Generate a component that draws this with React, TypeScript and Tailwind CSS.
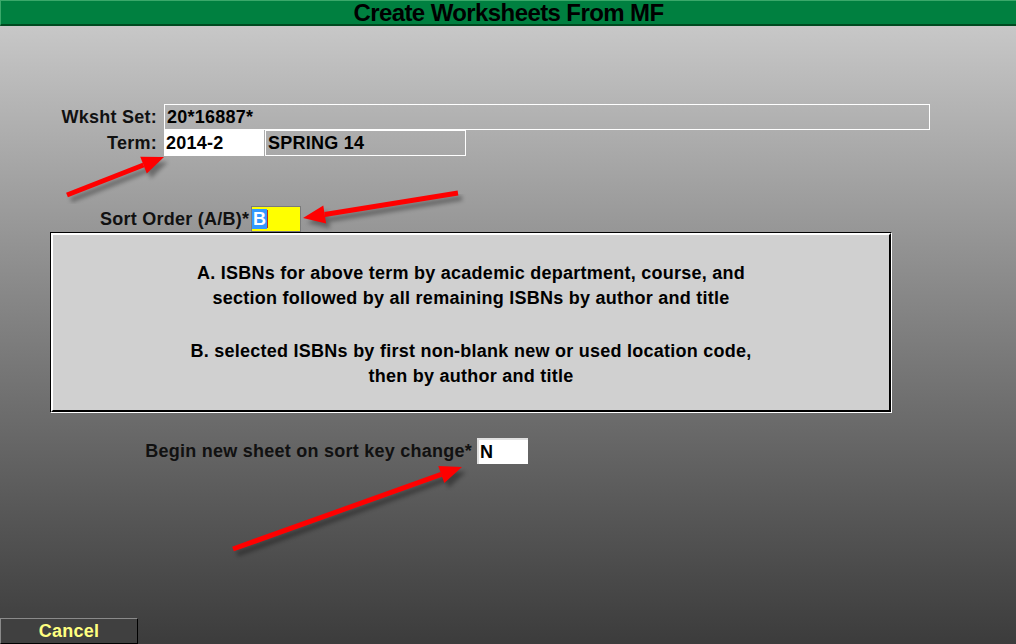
import React from "react";

const font = { fontFamily: '"Liberation Sans", Arial, sans-serif' };

function Arrow({ x1, y1, x2, y2 }: { x1: number; y1: number; x2: number; y2: number }) {
  const a = Math.atan2(y2 - y1, x2 - x1);
  const len = 22;
  const w = 9;
  const bx = x2 - len * Math.cos(a);
  const by = y2 - len * Math.sin(a);
  const px = -Math.sin(a) * w;
  const py = Math.cos(a) * w;
  const head = `${x2},${y2} ${bx + px},${by + py} ${bx - px},${by - py}`;
  return (
    <g>
      <g transform="translate(4,5)" opacity="0.35" filter="url(#blur)">
        <line x1={x1} y1={y1} x2={bx} y2={by} stroke="#000" strokeWidth="5" />
        <polygon points={head} fill="#000" />
      </g>
      <line x1={x1} y1={y1} x2={bx} y2={by} stroke="#ff0000" strokeWidth="5" />
      <polygon points={head} fill="#ff0000" />
    </g>
  );
}

export default function App() {
  return (
    <div
      className="relative w-[1016px] h-[644px] flex flex-col overflow-hidden bg-gradient-to-b from-[#cecece] to-[#3c3c3c] text-[18px] leading-[22px] tracking-[0.25px] font-bold text-[#111]"
      style={font}
    >
      <div className="h-[26px] shrink-0 bg-[#008040] border-t border-t-[#3aa86a] border-l border-l-[#3aa86a] border-b-2 border-b-[#004a20] flex items-center justify-center">
        <span className="text-[24px] font-bold text-black leading-[22px] tracking-[-0.6px]">
          Create Worksheets From MF
        </span>
      </div>

      <div className="flex flex-col pt-[78px]">
        <div className="flex items-center">
          <div className="w-[158px] text-right pr-[1px]">Wksht Set:</div>
          <div className="ml-[6px] w-[766px] h-[26px] border border-white flex items-center pl-[2px] text-black">
            20*16887*
          </div>
        </div>

        <div className="flex items-center">
          <div className="w-[158px] text-right pr-[1px]">Term:</div>
          <div className="ml-[6px] w-[100px] h-[26px] bg-white flex items-center pl-[2px] text-black">2014-2</div>
          <div className="ml-[1px] w-[201px] h-[26px] border border-white flex items-center pl-[2px] text-black">
            SPRING 14
          </div>
        </div>

        <div className="flex items-center mt-[50px]">
          <div className="ml-[100px] w-[150px]">Sort Order (A/B)*</div>
          <div className="ml-[1px] w-[50px] h-[26px] bg-[#ffff00] border border-[#7a7a7a] flex items-center">
            <span className="bg-[#3399ff] text-white px-[1px] leading-[20px]">B</span>
            <span className="w-[1px] h-[18px] bg-[#b03020]" />
          </div>
        </div>

        <div className="ml-[50px] w-[842px] h-[181px] border border-black border-b-white border-r-white">
          <div className="w-full h-full bg-[#d0d0d0] border-t-2 border-l-2 border-white border-b-2 border-r-2 border-b-black border-r-black flex flex-col items-center pt-[26px] text-center leading-[25px] text-black">
            <div>A. ISBNs for above term by academic department, course, and</div>
            <div>section followed by all remaining ISBNs by author and title</div>
            <div className="mt-[28px]">B. selected ISBNs by first non-blank new or used location code,</div>
            <div>then by author and title</div>
          </div>
        </div>

        <div className="flex items-center mt-[25px]">
          <div className="w-[472px] text-right">Begin new sheet on sort key change*</div>
          <div className="ml-[5px] w-[51px] h-[26px] bg-white border-l-2 border-t-2 border-[#e0e0e0] flex items-center pl-[1px] text-black">
            N
          </div>
        </div>
      </div>

      <div className="mt-auto w-[138px] h-[26px] bg-[#404040] border-t border-l border-[#8a8a8a] border-b border-r border-b-black border-r-black flex items-center justify-center text-[#ffff80]">
        Cancel
      </div>

      <svg className="absolute inset-0 pointer-events-none" width="1016" height="644">
        <defs>
          <filter id="blur">
            <feGaussianBlur stdDeviation="2" />
          </filter>
        </defs>
        <Arrow x1={67} y1={195} x2={164} y2={157} />
        <Arrow x1={458} y1={193} x2={303} y2={218} />
        <Arrow x1={233} y1={549} x2={462} y2={467} />
      </svg>
    </div>
  );
}
